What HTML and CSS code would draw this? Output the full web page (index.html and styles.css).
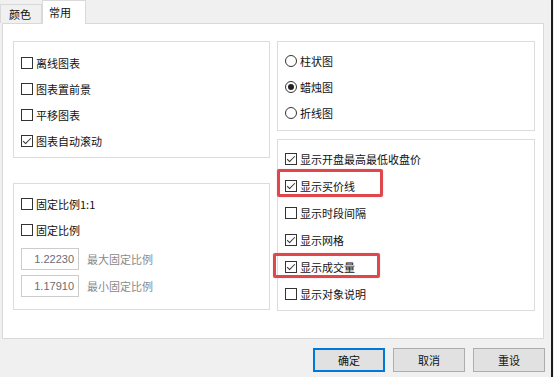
FILE: index.html
```html
<!DOCTYPE html>
<html lang="zh">

<head>
  <meta charset="UTF-8" />
  <title>图表设置</title>
  <link rel="stylesheet" href="styles.css">
</head>

<body>
  <div class="dialog">
    <!-- 标签 -->
    <div class="tabs">
      <div class="tab">颜色</div>
      <div class="tab active">常用</div>
    </div>

    <!-- 面板 -->
    <div class="panel">
      <div class="col">
        <div class="group g-chart">
          <div class="row"><span class="cb"></span>离线图表</div>
          <div class="row"><span class="cb"></span>图表置前景</div>
          <div class="row"><span class="cb"></span>平移图表</div>
          <div class="row"><span class="cb on"></span>图表自动滚动</div>
        </div>
        <div class="group g-scale">
          <div class="row"><span class="cb"></span>固定比例1:1</div>
          <div class="row"><span class="cb"></span>固定比例</div>
          <div class="field"><span class="input">1.22230</span><span class="hint">最大固定比例</span></div>
          <div class="field"><span class="input">1.17910</span><span class="hint">最小固定比例</span></div>
        </div>
      </div>
      <div class="col">
        <div class="group g-type">
          <div class="row"><span class="rb"></span>柱状图</div>
          <div class="row"><span class="rb on"></span>蜡烛图</div>
          <div class="row"><span class="rb"></span>折线图</div>
        </div>
        <div class="group g-show">
          <div class="row"><span class="cb on"></span>显示开盘最高最低收盘价</div>
          <div class="row"><span class="cb on"></span>显示买价线</div>
          <div class="row"><span class="cb"></span>显示时段间隔</div>
          <div class="row"><span class="cb on"></span>显示网格</div>
          <div class="row"><span class="cb on"></span>显示成交量</div>
          <div class="row"><span class="cb"></span>显示对象说明</div>
        </div>
      </div>
    </div>

    <!-- 按钮 -->
    <div class="buttons">
      <button class="default">确定</button>
      <button>取消</button>
      <button>重设</button>
    </div>
  </div>

  <!-- 标注 -->
  <div class="mark mark-1"></div>
  <div class="mark mark-2"></div>
</body>

</html>
```

FILE: styles.css
```css
body {
  margin: 0;
  background-color: #f0f0f0;
  font-family: "Noto Sans CJK SC", "Microsoft YaHei", sans-serif;
  font-size: 11px;
  color: #111;
  width: 554px;
  height: 377px;
  overflow: hidden;
  position: relative;
}

.dialog {
  width: 553px;
  height: 377px;
  border-right: 2px solid #1c1c1c;
  box-sizing: border-box;
}

.tabs {
  display: flex;
  height: 23px;
  align-items: flex-end;
}

.tab {
  width: 42px;
  height: 19px;
  line-height: 19px;
  padding-left: 8px;
  box-sizing: border-box;
  border: 1px solid #d9d9d9;
  border-bottom: none;
  background-color: #f0f0f0;
}

.tab.active {
  width: 44px;
  height: 24px;
  line-height: 22px;
  padding-left: 6px;
  margin-bottom: -1px;
  background-color: #fff;
  position: relative;
  z-index: 1;
}

.panel {
  margin-left: 2px;
  width: 542px;
  height: 316px;
  box-sizing: border-box;
  border: 1px solid #d9d9d9;
  background-color: #fff;
  padding: 17px 0 0 10px;
  display: grid;
  grid-template-columns: 257px 258px;
  column-gap: 7px;
}

.col {
  display: flex;
  flex-direction: column;
}

.group {
  border: 1px solid #dcdcdc;
  box-sizing: border-box;
  padding-left: 7px;
}

.g-chart {
  height: 117px;
  padding-top: 8px;
}

.g-scale {
  height: 127px;
  margin-top: 25px;
  padding-top: 7px;
}

.g-type {
  height: 90px;
  padding-top: 6px;
}

.g-show {
  height: 172px;
  margin-top: 8px;
  padding-top: 5px;
}

.g-show .row {
  height: 27px;
}

.row {
  height: 26px;
  display: flex;
  align-items: center;
  white-space: nowrap;
}

.cb,
.rb {
  width: 12px;
  height: 12px;
  box-sizing: border-box;
  border: 1px solid #333;
  background-color: #fff;
  margin-right: 3px;
  position: relative;
  flex-shrink: 0;
}

.cb.on::after {
  content: "";
  position: absolute;
  left: 3px;
  top: 0px;
  width: 3px;
  height: 7px;
  border: solid #333;
  border-width: 0 1px 1px 0;
  transform: rotate(45deg);
}

.rb {
  border-radius: 50%;
}

.rb.on::after {
  content: "";
  position: absolute;
  left: 2px;
  top: 2px;
  width: 6px;
  height: 6px;
  border-radius: 50%;
  background-color: #222;
}

.field {
  display: flex;
  align-items: center;
  margin-top: 5px;
}

.input {
  width: 58px;
  height: 22px;
  box-sizing: border-box;
  border: 1px solid #ccc;
  text-align: right;
  padding-right: 4px;
  line-height: 20px;
  color: #6d6d6d;
  font-family: "Liberation Sans", sans-serif;
  font-size: 11px;
  margin-right: 8px;
}

.hint {
  color: #8a8a8a;
}

.buttons {
  display: flex;
  justify-content: flex-end;
  gap: 8px;
  padding: 9px 6px 0 0;
}

button {
  width: 72px;
  height: 24px;
  border: 1px solid #adadad;
  background-color: #e1e1e1;
  font-family: inherit;
  font-size: 11px;
  color: #111;
  padding: 0;
}

button.default {
  border: 2px solid #0078d7;
}

.mark {
  position: absolute;
  border: 3px solid #e0474d;
  border-radius: 2px;
  box-shadow: 0 0 1px rgba(224, 71, 77, 0.6);
}

.mark-1 {
  left: 277px;
  top: 169px;
  width: 100px;
  height: 22px;
}

.mark-2 {
  left: 273px;
  top: 253px;
  width: 101px;
  height: 19px;
}
```
